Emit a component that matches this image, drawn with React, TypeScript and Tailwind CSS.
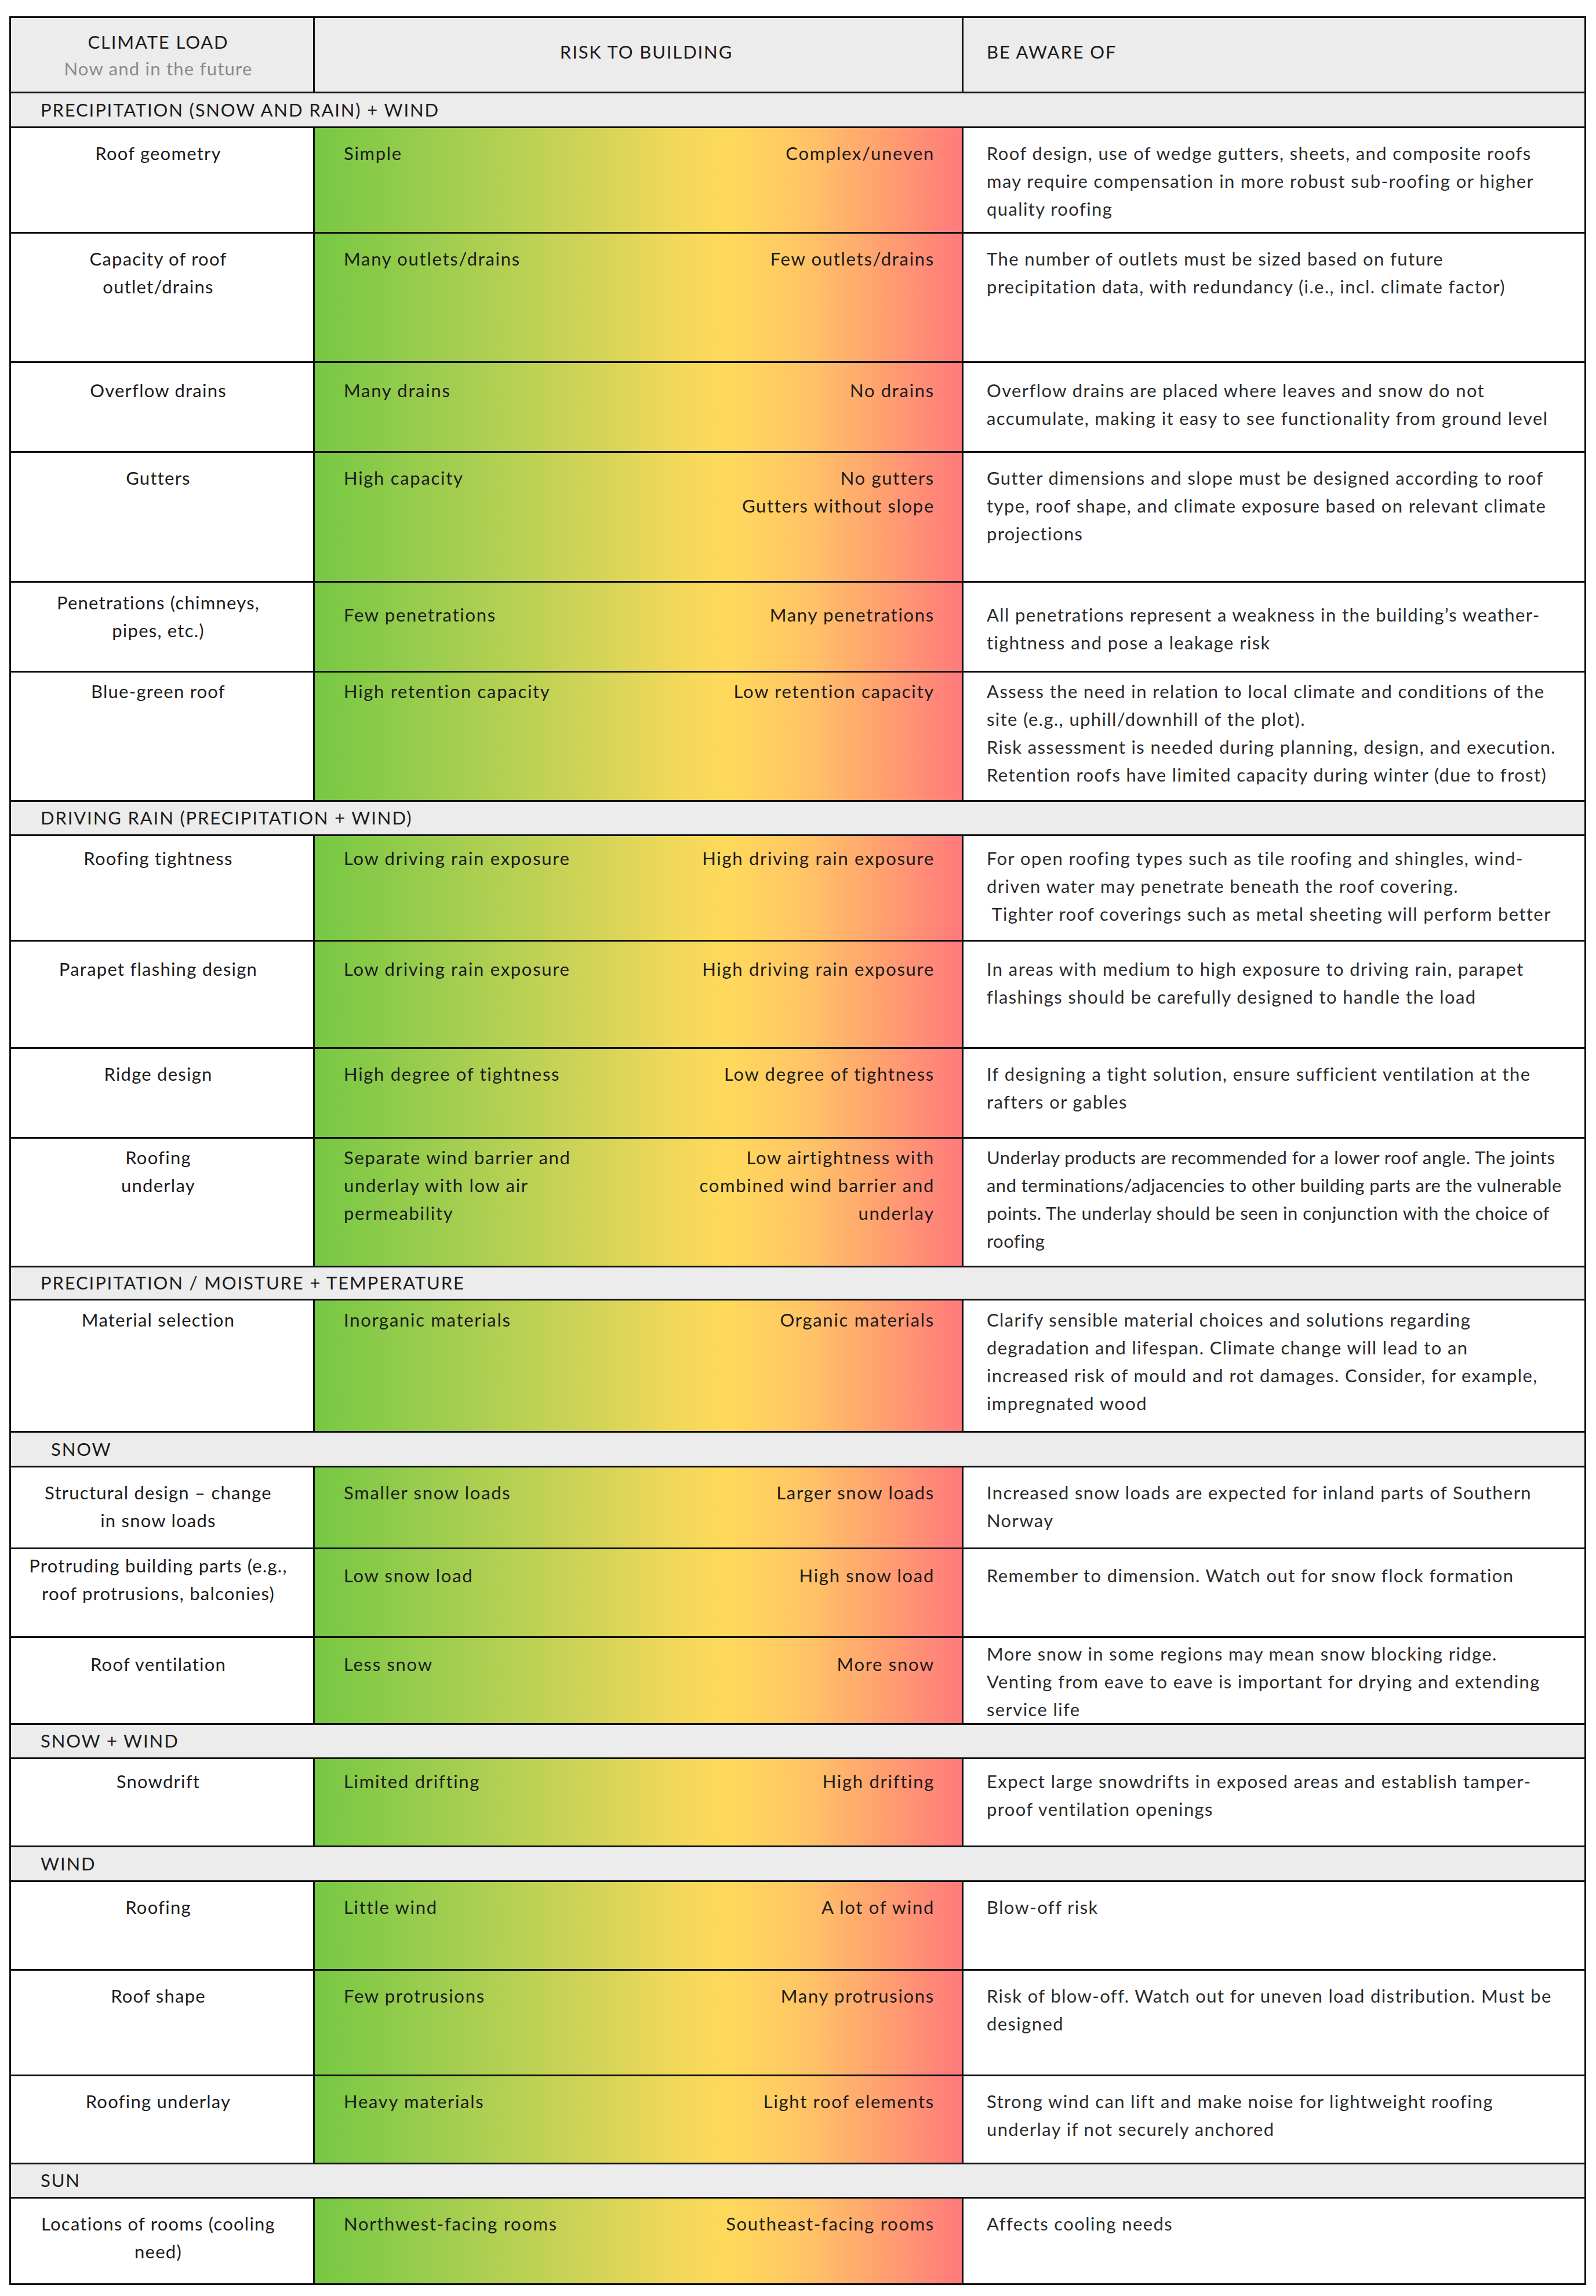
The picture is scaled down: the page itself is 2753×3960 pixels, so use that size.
type Risk = {
  kind: "row";
  h: string;
  load: string[];
  low: string[];
  high: string[];
  note: string[];
  ptLoad?: string;
  ptRisk?: string;
  ptNote?: string;
  tightNote?: boolean;
};

type Section = {
  kind: "section";
  h: string;
  title: string;
  indent?: boolean;
};

type Item = Risk | Section;

const items: Item[] = [
  { kind: "section", h: "h-[60px]", title: "PRECIPITATION (SNOW AND RAIN) + WIND" },
  {
    kind: "row",
    h: "h-[182px]",
    load: ["Roof geometry"],
    low: ["Simple"],
    high: ["Complex/uneven"],
    note: [
      "Roof design, use of wedge gutters, sheets, and composite roofs",
      "may require compensation in more robust sub-roofing or higher",
      "quality roofing",
    ],
  },
  {
    kind: "row",
    h: "h-[223px]",
    load: ["Capacity of roof", "outlet/drains"],
    low: ["Many outlets/drains"],
    high: ["Few outlets/drains"],
    note: [
      "The number of outlets must be sized based on future",
      "precipitation data, with redundancy (i.e., incl. climate factor)",
    ],
  },
  {
    kind: "row",
    h: "h-[155px]",
    load: ["Overflow drains"],
    low: ["Many drains"],
    high: ["No drains"],
    note: [
      "Overflow drains are placed where leaves and snow do not",
      "accumulate, making it easy to see functionality from ground level",
    ],
    ptLoad: "pt-[23px]",
    ptRisk: "pt-[23px]",
    ptNote: "pt-[23px]",
  },
  {
    kind: "row",
    h: "h-[224px]",
    load: ["Gutters"],
    low: ["High capacity"],
    high: ["No gutters", "Gutters without slope"],
    note: [
      "Gutter dimensions and slope must be designed according to roof",
      "type, roof shape, and climate exposure based on relevant climate",
      "projections",
    ],
  },
  {
    kind: "row",
    h: "h-[155px]",
    load: ["Penetrations (chimneys,", "pipes, etc.)"],
    low: ["Few penetrations"],
    high: ["Many penetrations"],
    note: [
      "All penetrations represent a weakness in the building\u2019s weather-",
      "tightness and pose a leakage risk",
    ],
    ptLoad: "pt-[10px]",
    ptRisk: "pt-[31px]",
    ptNote: "pt-[31px]",
  },
  {
    kind: "row",
    h: "h-[223px]",
    load: ["Blue-green roof"],
    low: ["High retention capacity"],
    high: ["Low retention capacity"],
    note: [
      "Assess the need in relation to local climate and conditions of the",
      "site (e.g., uphill/downhill of the plot).",
      "Risk assessment is needed during planning, design, and execution.",
      "Retention roofs have limited capacity during winter (due to frost)",
    ],
    ptLoad: "pt-[8px]",
    ptRisk: "pt-[8px]",
    ptNote: "pt-[8px]",
  },
  { kind: "section", h: "h-[59px]", title: "DRIVING RAIN (PRECIPITATION + WIND)" },
  {
    kind: "row",
    h: "h-[182px]",
    load: ["Roofing tightness"],
    low: ["Low driving rain exposure"],
    high: ["High driving rain exposure"],
    note: [
      "For open roofing types such as tile roofing and shingles, wind-",
      "driven water may penetrate beneath the roof covering.",
      "\u00a0Tighter roof coverings such as metal sheeting will perform better",
    ],
    ptLoad: "pt-[14px]",
    ptRisk: "pt-[14px]",
    ptNote: "pt-[14px]",
  },
  {
    kind: "row",
    h: "h-[185px]",
    load: ["Parapet flashing design"],
    low: ["Low driving rain exposure"],
    high: ["High driving rain exposure"],
    note: [
      "In areas with medium to high exposure to driving rain, parapet",
      "flashings should be carefully designed to handle the load",
    ],
    ptLoad: "pt-[23px]",
    ptRisk: "pt-[23px]",
    ptNote: "pt-[23px]",
  },
  {
    kind: "row",
    h: "h-[155px]",
    load: ["Ridge design"],
    low: ["High degree of tightness"],
    high: ["Low degree of tightness"],
    note: [
      "If designing a tight solution, ensure sufficient ventilation at the",
      "rafters or gables",
    ],
  },
  {
    kind: "row",
    h: "h-[222px]",
    load: ["Roofing", "underlay"],
    low: ["Separate wind barrier and", "underlay with low air", "permeability"],
    high: ["Low airtightness with", "combined wind barrier and", "underlay"],
    note: [
      "Underlay products are recommended for a lower roof angle. The joints",
      "and terminations/adjacencies to other building parts are the vulnerable",
      "points. The underlay should be seen in conjunction with the choice of",
      "roofing",
    ],
    ptLoad: "pt-[8px]",
    ptRisk: "pt-[8px]",
    ptNote: "pt-[8px]",
    tightNote: true,
  },
  { kind: "section", h: "h-[57px]", title: "PRECIPITATION / MOISTURE + TEMPERATURE" },
  {
    kind: "row",
    h: "h-[228px]",
    load: ["Material selection"],
    low: ["Inorganic materials"],
    high: ["Organic materials"],
    note: [
      "Clarify sensible material choices and solutions regarding",
      "degradation and lifespan. Climate change will lead to an",
      "increased risk of mould and rot damages. Consider, for example,",
      "impregnated wood",
    ],
    ptLoad: "pt-[9px]",
    ptRisk: "pt-[9px]",
    ptNote: "pt-[9px]",
  },
  { kind: "section", h: "h-[60px]", title: "SNOW", indent: true },
  {
    kind: "row",
    h: "h-[141px]",
    load: ["Structural design \u2013 change", "in snow loads"],
    low: ["Smaller snow loads"],
    high: ["Larger snow loads"],
    note: [
      "Increased snow loads are expected for inland parts of Southern",
      "Norway",
    ],
  },
  {
    kind: "row",
    h: "h-[153px]",
    load: ["Protruding building parts (e.g.,", "roof protrusions, balconies)"],
    low: ["Low snow load"],
    high: ["High snow load"],
    note: ["Remember to dimension. Watch out for snow flock formation"],
    ptLoad: "pt-[4px]",
    ptRisk: "pt-[21px]",
    ptNote: "pt-[21px]",
  },
  {
    kind: "row",
    h: "h-[150px]",
    load: ["Roof ventilation"],
    low: ["Less snow"],
    high: ["More snow"],
    note: [
      "More snow in some regions may mean snow blocking ridge.",
      "Venting from eave to eave is important for drying and extending",
      "service life",
    ],
    ptLoad: "pt-[21px]",
    ptRisk: "pt-[21px]",
    ptNote: "pt-[3px]",
  },
  { kind: "section", h: "h-[59px]", title: "SNOW + WIND" },
  {
    kind: "row",
    h: "h-[152px]",
    load: ["Snowdrift"],
    low: ["Limited drifting"],
    high: ["High drifting"],
    note: [
      "Expect large snowdrifts in exposed areas and establish tamper-",
      "proof ventilation openings",
    ],
    ptLoad: "pt-[14px]",
    ptRisk: "pt-[14px]",
    ptNote: "pt-[14px]",
  },
  { kind: "section", h: "h-[60px]", title: "WIND" },
  {
    kind: "row",
    h: "h-[153px]",
    load: ["Roofing"],
    low: ["Little wind"],
    high: ["A lot of wind"],
    note: ["Blow-off risk"],
  },
  {
    kind: "row",
    h: "h-[182px]",
    load: ["Roof shape"],
    low: ["Few protrusions"],
    high: ["Many protrusions"],
    note: [
      "Risk of blow-off. Watch out for uneven load distribution. Must be",
      "designed",
    ],
  },
  {
    kind: "row",
    h: "h-[152px]",
    load: ["Roofing underlay"],
    low: ["Heavy materials"],
    high: ["Light roof elements"],
    note: [
      "Strong wind can lift and make noise for lightweight roofing",
      "underlay if not securely anchored",
    ],
  },
  { kind: "section", h: "h-[59px]", title: "SUN" },
  {
    kind: "row",
    h: "h-[149px]",
    load: ["Locations of rooms (cooling", "need)"],
    low: ["Northwest-facing rooms"],
    high: ["Southeast-facing rooms"],
    note: ["Affects cooling needs"],
  },
];

function Lines({ lines }: { lines: string[] }) {
  return (
    <>
      {lines.map((l, i) => (
        <div key={i} className="whitespace-pre">
          {l}
        </div>
      ))}
    </>
  );
}

function SectionRow({ s }: { s: Section }) {
  return (
    <div
      className={`${s.h} flex items-center border-t-[3px] border-[#111] bg-[#ececec] tracking-[0.06em] ${
        s.indent ? "pl-[69px]" : "pl-[51px]"
      }`}
    >
      <span className="pb-[2px]">{s.title}</span>
    </div>
  );
}

function RiskRow({ r }: { r: Risk }) {
  return (
    <div className={`${r.h} flex border-t-[3px] border-[#111]`}>
      <div
        className={`w-[521px] shrink-0 bg-white pl-[4px] pr-[17px] text-center ${
          r.ptLoad ?? "pt-[19px]"
        }`}
      >
        <Lines lines={r.load} />
      </div>
      <div
        className={`flex w-[1119px] shrink-0 justify-between border-l-[3px] border-[#111] bg-[linear-gradient(to_right,#76c843_0%,#a4ce50_22%,#d4d458_44%,#f2d85a_56%,#ffd95b_64%,#ffc466_76%,#ff9c71_89%,#ff7a7c_100%)] pl-[50px] pr-[47px] tracking-[0.055em] ${
          r.ptRisk ?? "pt-[19px]"
        }`}
      >
        <div className="text-left">
          <Lines lines={r.low} />
        </div>
        <div className="text-right">
          <Lines lines={r.high} />
        </div>
      </div>
      <div
        className={`flex-1 border-l-[3px] border-[#111] bg-white pl-[40px] text-[#2a2a2a] ${
          r.ptNote ?? "pt-[19px]"
        } ${r.tightNote ? "tracking-[0.015em]" : "tracking-[0.045em]"}`}
      >
        <Lines lines={r.note} />
      </div>
    </div>
  );
}

export default function App() {
  return (
    <div className="min-h-screen bg-white pl-[16px] pt-[28px] font-['Lato','Liberation_Sans',sans-serif] text-[31px] leading-[48px] tracking-[0.04em] text-[#1c1a1b]">
      <div className="w-[2720px] border-[3px] border-[#111]">
        {/* header */}
        <div className="flex h-[127px] bg-[#ececec] tracking-[0.06em]">
          <div className="flex w-[521px] shrink-0 flex-col justify-center pl-[4px] pr-[17px] text-center leading-[46px]">
            <div>CLIMATE LOAD</div>
            <div className="tracking-[0.04em] text-[#8a8a8a]">Now and in the future</div>
          </div>
          <div className="flex w-[1119px] shrink-0 items-center justify-center border-l-[3px] border-[#111] pb-[12px] pl-[28px]">
            RISK TO BUILDING
          </div>
          <div className="flex flex-1 items-center border-l-[3px] border-[#111] pb-[12px] pl-[40px]">
            BE AWARE OF
          </div>
        </div>

        {items.map((it, i) =>
          it.kind === "section" ? (
            <SectionRow key={i} s={it} />
          ) : (
            <RiskRow key={i} r={it} />
          )
        )}
      </div>
    </div>
  );
}
